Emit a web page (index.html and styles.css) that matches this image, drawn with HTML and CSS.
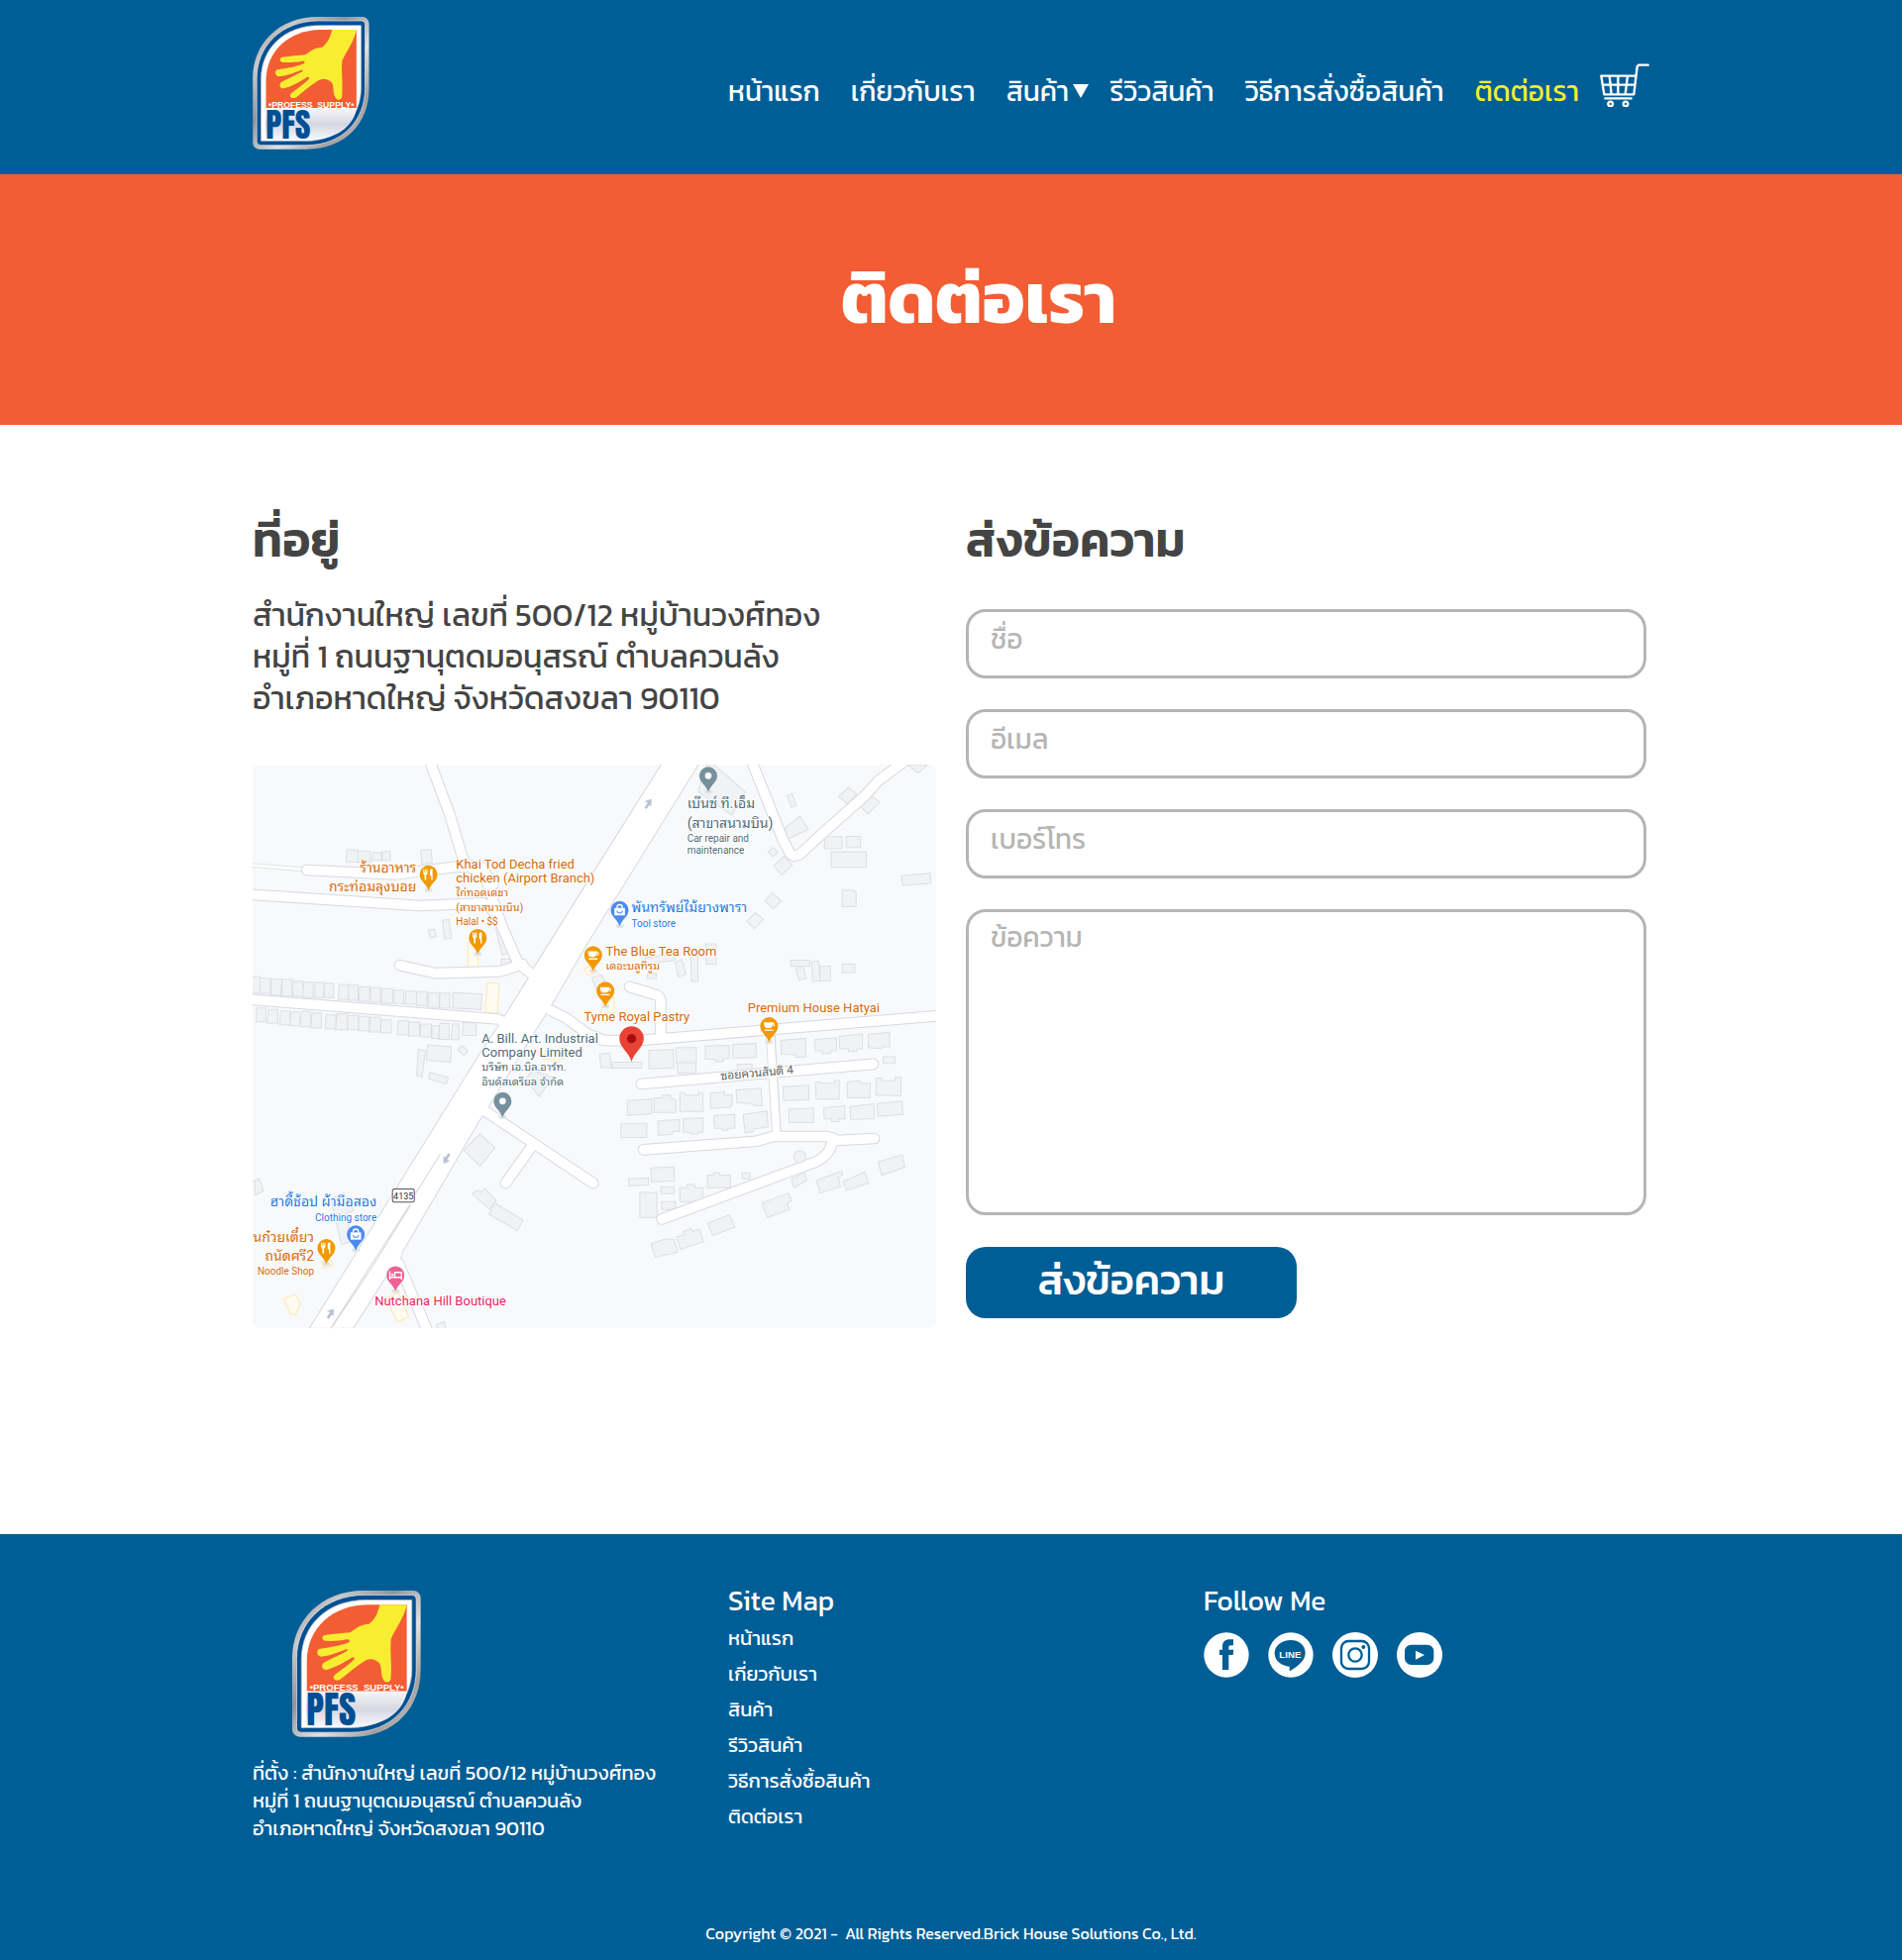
FILE: index.html
```html
<!DOCTYPE html>
<html lang="th">
<head>
<meta charset="utf-8">
<meta name="viewport" content="width=device-width, initial-scale=1">
<title>ติดต่อเรา</title>
<link rel="stylesheet" href="styles.css">
</head>
<body>
<svg class="defs" width="0" height="0" aria-hidden="true">
  <defs>
    <linearGradient id="silver" x1="0" y1="0" x2="1" y2="1">
      <stop offset="0" stop-color="#8f9296"/><stop offset=".2" stop-color="#c9c9cb"/><stop offset=".4" stop-color="#8f9499"/>
      <stop offset=".6" stop-color="#e4e2e0"/><stop offset=".8" stop-color="#a3a09e"/><stop offset="1" stop-color="#d5d2d0"/>
    </linearGradient>
    <linearGradient id="plate" x1="0" y1="0" x2="0" y2="1">
      <stop offset="0" stop-color="#f4f4f8"/><stop offset=".5" stop-color="#d6d7e2"/><stop offset="1" stop-color="#f6f6fa"/>
    </linearGradient>
    <symbol id="logo" viewBox="48 51 353 402">
      <path fill="url(#silver)" d="M245 51H380a20 20 0 0 1 20 20V270C400 370 330 452 210 452H68a20 20 0 0 1-20-20V235C48 135 125 51 245 51Z"/>
      <path fill="#004f92" stroke="#e8e8ea" stroke-width="2" d="M247 63H376a12 12 0 0 1 12 12V268C388 362 322 440 210 440H72a12 12 0 0 1-12-12V237C60 140 135 63 247 63Z"/>
      <path fill="#fff" stroke="#b9bcc2" stroke-width="2" d="M249 77H376V266C376 352 312 427 208 427H73V239C73 148 142 77 249 77Z"/>
      <path fill="url(#plate)" d="M86 330H362C352 386 296 421 232 423H86Z"/>
      <path fill="#f35d33" d="M252 90H362V327H88V246C88 152 160 92 252 90Z"/>
      <path fill="#f9ed32" d="M288 90H362C355 125 332 155 319 183C315 215 322 250 318 295C315 304 303 305 299 297C289 282 295 262 287 250C275 238 262 236 248 243C232 252 208 272 182 293C170 303 156 294 163 284C170 276 205 254 218 239C220 234 216 232 211 235C190 249 160 264 142 268C130 269 126 256 134 249C155 238 176 229 198 217C201 213 198 211 193 213C172 221 148 230 128 232C115 231 113 215 122 211C150 206 180 203 204 192C207 187 203 184 198 185C178 189 158 190 138 189C128 186 129 174 138 173C160 170 185 168 207 166C220 158 230 145 258 143C275 130 282 115 288 90Z"/>
      <text class="logo-band" x="225" y="326" text-anchor="middle">•PROFESS&nbsp; SUPPLY•</text>
      <text class="logo-name" x="87" y="421">PFS</text>
    </symbol>
    <symbol id="pin" viewBox="-30 -30 60 84" overflow="visible">
      <ellipse cx="0" cy="48" rx="12" ry="6" fill="#dfe3e6"/>
      <path d="M-27 0A27 27 0 1 1 27 0C27 20 7 28 0 49C-7 28-27 20-27 0Z"/>
    </symbol>
    <g id="fork" fill="#fff"><path d="M-16-16h3v9h2v-9h3v9h2v-9h3v11q0 6-4 7v15h-5V2q-4-1-4-7zM4-10q0-7 8-7v34H8V4H4z"/></g>
    <g id="cup"><path fill="#fff" d="M-16-11h28v3h5v9H9q-2 5-8 5h-9q-8-2-8-17zM-14 10h27v4h-27z"/><path fill="#f29900" d="M11-5h3v4h-3z"/></g>
    <g id="bag"><path fill="#fff" d="M-16-6h32v22h-32z"/><path fill="none" stroke="#fff" stroke-width="4" d="M-8-5v-3a8 8 0 0 1 16 0v3"/><path fill="none" stroke="#4d8af0" stroke-width="3" d="M-8 2a8 7 0 0 0 16 0"/></g>
  </defs>
</svg>

<header class="header">
  <div class="container header-row">
    <a href="#" aria-label="PFS"><svg class="logo"><use href="#logo"/></svg></a>
    <nav class="nav">
      <a href="#">หน้าแรก</a>
      <a href="#">เกี่ยวกับเรา</a>
      <a class="has-menu" href="#">สินค้า<svg width="16" height="14" viewBox="0 0 16 14"><path fill="#fff" d="M0 0h16L8 14z"/></svg></a>
      <a href="#">รีวิวสินค้า</a>
      <a href="#">วิธีการสั่งซื้อสินค้า</a>
      <a class="active" href="#">ติดต่อเรา</a>
      <a class="cart" href="#" aria-label="ตะกร้าสินค้า"><svg width="50" height="44" viewBox="45 26 150 132" fill="none" stroke="#fff" stroke-width="7" stroke-linecap="round" stroke-linejoin="round"><path d="M191 31H162L158 36L148 120H58L49 64H154M53 91H150M74 64l6 56M100 64v56M129 64l-7 56M61 132H140"/><circle cx="77" cy="149" r="7"/><circle cx="123" cy="149" r="7"/></svg></a>
    </nav>
  </div>
</header>

<section class="hero"><h1>ติดต่อเรา</h1></section>

<main class="container main">
  <section>
    <h2>ที่อยู่</h2>
    <p class="address">สำนักงานใหญ่ เลขที่ 500/12 หมู่บ้านวงศ์ทอง<br>หมู่ที่ 1 ถนนฐานุตดมอนุสรณ์ ตำบลควนลัง<br>อำเภอหาดใหญ่ จังหวัดสงขลา 90110</p>
    <svg class="map" viewBox="0 0 689 568" role="img" aria-label="แผนที่">
      <defs>
        <path id="lanes" d="M578 10L645 190L685 325L755 385L800 520L850 635L890 668M212 355L480 368L665 345L740 345L775 400M20 428L555 463L745 455L780 480M493 643L600 667L795 662L865 640M20 745L790 806L830 825M950 780L995 802L1060 850L1110 870L1190 872L1285 865L2130 795M1188 708L1270 733Q1282 738 1282 755V865M1555 20L1650 260L1672 303Q1685 320 1706 305L1770 245L1900 130L1940 85L2020 26M1223 1002L1925 942M1230 1201L1573 1175L1620 1161H1785L1815 1173L1928 1167M1802 1165Q1800 1215 1750 1238L1285 1411M745 1080L1078 1302M893 1190L813 1302M490 1545L575 1745"/>
        <path id="highway" d="M222 1740L740 905L793 826L883 682L897 655L1100 330L1285 36L1300 10H1410L1395 36L1060 575L947 770L932 793L865 900L760 1070L745 1092L500 1510Q490 1540 497 1560L450 1585L352 1740Z"/>
      </defs>
      <rect width="689" height="568" fill="#f8f9fb"/>
      <g transform="translate(-16 -12) scale(.33333)">
        <g class="block">
          <path d="M333 294h33v36h-35zM366 298h38v34h-38zM412 302h25v24h-28zM440 299h24v27h-24zM556 295l32-2 3 40-31 4zM622 507l20-3 8 57-22 3zM580 537l18-3 5 22-18 4zM783 535l18-3 20 75-18 5zM800 623l28 2-2 22-27-3z"/>
          <path d="M40 677h30v50H40zM70 682h32v46H70zM105 685h32v48h-34zM137 685h30v52h-34zM172 691h28v46h-30zM203 694h28v46h-32zM238 695h27v46h-30zM265 697h28v44h-31zM310 701h28v46h-31zM339 703h28v46h-31zM372 708h30v44h-33zM405 711h30v44h-32zM438 714h34v44h-35zM476 718h29v41h-29zM511 721h33v40h-35zM544 723h32v42h-32zM580 726h32v44h-35zM615 727h29v45h-31zM654 725l88 5-3 47-86-5z"/>
          <path d="M60 772h28v42H58zM96 777h28v42H92zM133 781h28v42h-32zM165 784h26v42h-31zM197 783h27v46h-31zM228 787h28v46h-32zM270 793h30v42h-33zM303 790h32v48h-36zM336 795h32v43h-34zM370 798h31v43h-33zM404 801h31v44h-34zM437 808h30v39h-32zM488 811h32v42h-35zM521 815h32v42h-34zM556 821h32v39h-32zM591 826h21v38h-22zM614 819h28v48h-32zM652 821h20v47h-24zM684 817h40v38h-42z"/>
          <path d="M577 884l72 6-3 46-72-6zM549 897l22 3-11 80-16-3zM584 967l56 15-6 20-54-16zM680 886l20 15-12 14-20-15zM48 1297l20-9 13 38-26 12v-40zM873 990l20-30 62 22-40 58zM735 1153l46 42-45 56-49-48zM712 1335l14-12 12 7 13-11 34 36-20 26zM780 1362l86 52-18 32-85-50zM285 1350l38-18 32 54-25 8 18 85-32 8zM603 1731l25-10 6 24h-28z"/>
          <path d="M1425 20l112 98-40 70-102-70zM1665 130l15-6 12 36-15 5zM1658 228l45-36 26 40-65 30zM1606 300l15-13 16 13-15 15zM1624 342l30-28 26 26-32 30zM1820 133l30-28 25 20-27 30zM1887 163l33-33 24 20-36 36zM2030 36l30 26 30-26zM1597 448l22-25 27 25-23 25zM1543 510l25-26 25 20-28 28zM1778 254h53v36h-54zM1843 253h44v34h-44zM1798 300h106v47h-106zM2011 372l86-7 2 30-86 7zM1831 416h36l6 8v42h-42z"/>
          <path d="M1675 628h58v18h-58zM1690 652l24-6 8 37-22 6zM1738 632l22-2 4 60-22 2zM1765 646h30v44h-32zM1831 640h38v25h-38zM1373 616h22v75h-20zM1418 578h32v62h-30zM1235 620l90-12v20l-88 12zM1325 634l22-8 12 44-24 8zM1242 670l27-3v16h-28zM1074 680l30-8 15 40-30 8z"/>
          <path d="M1098 912l30-4 5 44-32 1zM1135 936h90v18h-90zM1246 900l74-2 2 56-76 2zM1328 892h62v46h-62zM1333 938h56v32h-56zM1417 887l72-2v40h-18v10h-24v-8h-30zM1500 883l70-4 2 42-72 4zM1514 942h44v20h-44zM1645 870l76-6v56l-30 2v-8l-44-2zM1748 868l66-6v40h-18v8h-26v-8h-20zM1822 858l70-8v46h-16v7h-26v-7h-27zM1910 852l64-6v44h-20l-2 6-42-4zM1955 920h36v20h-36z"/>
          <path d="M1181 1052l74-4v44l-74 5zM1262 1044h24v-8h26v8l16 6v38h-66zM1340 1028h14l6 8h36v-8h14v57h-70zM1433 1030l42-4v10h24l-2 36-64 4zM1510 1020l75-5 4 54-24-2-8-6-44-2zM1162 1121h78v43h-78zM1273 1114l66-4v36h-20l-2 8-42 4zM1350 1108l60-4v44h-16v6h-20v-6h-24zM1443 1098l62-4 2 42h-22v6h-16v-6h-24zM1531 1094l72-10 4 48-44 6v8l-26 4zM1652 1010l78-4v44l-76 2zM1750 996h14l6 4h38v-8h14v56h-70zM1846 996l40-4v8h30v44h-70zM1933 984h18v8h40v-10h18v56l-76-2zM1670 1078l74-3v44h-74zM1775 1074l64-6v40h-18v8h-22v-8h-22zM1854 1070l72-8 3 44-72 4zM1936 1062l76-8 3 40-76 6z"/>
          <path d="M1252 1256l70-4 2 44-70 2zM1185 1290l60-4v22l-60 2zM1219 1330h52v76h-52zM1283 1314h40v20h-40zM1285 1358h42v24h-42zM1340 1316h22v-10h24v10h24v42h-70zM1423 1278h20v-8h18v8h32v38h-70zM1528 1271h24v18h-24zM1677 1290l40-20 6 24-38 22zM1752 1294l76-28 5 10-14 8 6 28-60 20zM1833 1298l66-30 12 34-66 22zM1939 1238l74-22 8 38-70 24zM1588 1362l80-30 10 22-14 10 8 18-68 24zM1424 1424l66-26 16 38-66 24zM1252 1486l40-14h30l12 38-68 16zM1330 1466l22-8-2-10 24-8 4 8 22-6 12 38-70 22z"/>
        </g>
        <g class="shop-block"><path d="M700 575h28l3 78h-32zM758 695l36 4-6 91-37-6zM1050 655l20-10 12 24-22 4zM1108 745l32-5 2 48h-40zM925 925l12-30 30 8 20-15 25 25-40 20zM142 1652l36-14 14 28-14 34-16-2zM450 1650l40-16 30 72-34 16zM256 1540l30-6 4 18-26 6z"/></g>
        <path class="thin-casing" d="M20 338L205 353"/><path class="thin-lane" d="M20 338L205 353"/>
        <use href="#lanes" class="casing"/><path class="casing wide" d="M1614 850L1633 1160"/><use href="#highway" class="casing edge"/>
        <use href="#highway" fill="#fff"/><use href="#lanes" class="lane"/><path class="lane wide" d="M1614 860L1633 1165"/>
        <path class="median" d="M285 1740L400 1560L525 1365M290 1735L410 1555L525 1370M540 1335L615 1215"/>
        <circle class="round" cx="1703" cy="1222" r="18"/>
        <path fill="#b9bfd4" d="M1233 166l10-15-9-4 20-7v22l-6-4-9 13zM272 1708l10-15-9-4 20-7v22l-6-4-9 13zM646 1216l-10 15 9 4-20 8v-23l6 4 9-13z"/>
      </g>
      <g class="label food">
        <text x="165" y="109" text-anchor="end" class="th">ร้านอาหาร</text>
        <text x="165" y="128" text-anchor="end" class="th">กระท่อมลุงบอย</text>
        <text x="205" y="105">Khai Tod Decha fried</text><text x="205" y="119">chicken (Airport Branch)</text>
        <text x="205" y="133" class="th-sm">ไก่ทอดเดชา</text><text x="205" y="148" class="th-sm">(สาขาสนามบิน)</text><text x="205" y="162" class="sm">Halal • $$</text>
        <text x="356" y="193">The Blue Tea Room</text><text x="356" y="207" class="th-sm">เดอะบลูทีรูม</text>
        <text x="334" y="259">Tyme Royal Pastry</text><text x="499" y="250">Premium House Hatyai</text>
        <text x="62" y="481" text-anchor="end" class="th">านก๋วยเตี๋ยว</text><text x="62" y="500" text-anchor="end" class="th">ถนัดศรี2</text><text x="62" y="514" text-anchor="end" class="sm">Noodle Shop</text>
      </g>
      <g class="label place">
        <text x="438" y="44" class="th">เบ๊นซ์ ที.เอ็ม</text><text x="438" y="64" class="th">(สาขาสนามบิน)</text>
        <text x="438" y="78" class="sm">Car repair and</text><text x="438" y="90" class="sm">maintenance</text>
        <text x="231" y="281">A. Bill. Art. Industrial</text><text x="231" y="295">Company Limited</text>
        <text x="231" y="309" class="th-sm">บริษัท เอ.บิล.อาร์ท.</text><text x="231" y="324" class="th-sm">อินดัสเตรียล จำกัด</text>
      </g>
      <g class="label store">
        <text x="382" y="149" class="th">พันทรัพย์ไม้ยางพารา</text><text x="382" y="164" class="sm">Tool store</text>
        <text x="125" y="445" text-anchor="end" class="th">ฮาดี้ช้อป ผ้ามือสอง</text><text x="125" y="460" text-anchor="end" class="sm">Clothing store</text>
      </g>
      <text class="label hotel" x="123" y="545">Nutchana Hill Boutique</text>
      <text class="label street" x="472" y="318" transform="rotate(-5 472 318)">ซอยควนสันติ 4</text>
      <rect x="141" y="428" width="22" height="13" rx="2" fill="#fff" stroke="#555"/>
      <text class="label route" x="152" y="438" text-anchor="middle">4135</text>
      <g transform="translate(-16 -12) scale(.33333)">
        <g fill="#f29900">
          <g transform="translate(580 368)"><use href="#pin" x="-30" y="-30" width="60" height="84"/><use href="#fork"/></g>
          <g transform="translate(729 560)"><use href="#pin" x="-30" y="-30" width="60" height="84"/><use href="#fork"/></g>
          <g transform="translate(271 1498)"><use href="#pin" x="-30" y="-30" width="60" height="84"/><use href="#fork"/></g>
          <g transform="translate(1078 612)"><use href="#pin" x="-30" y="-30" width="60" height="84"/><use href="#cup"/></g>
          <g transform="translate(1115 720)"><use href="#pin" x="-30" y="-30" width="60" height="84"/><use href="#cup"/></g>
          <g transform="translate(1610 827)"><use href="#pin" x="-30" y="-30" width="60" height="84"/><use href="#cup"/></g>
        </g>
        <g fill="#4d8af0">
          <g transform="translate(1158 476)"><use href="#pin" x="-30" y="-30" width="60" height="84"/><use href="#bag"/></g>
          <g transform="translate(360 1457)"><use href="#pin" x="-30" y="-30" width="60" height="84"/><use href="#bag"/></g>
        </g>
        <g fill="#76909d">
          <g transform="translate(1426 70)"><use href="#pin" x="-30" y="-30" width="60" height="84"/><circle r="10" fill="#fff"/></g>
          <g transform="translate(804 1054)"><use href="#pin" x="-30" y="-30" width="60" height="84"/><circle r="10" fill="#fff"/></g>
        </g>
        <g fill="#f06292" transform="translate(480 1580)"><use href="#pin" x="-30" y="-30" width="60" height="84"/><path fill="none" stroke="#fff" stroke-width="4" d="M-17-12V14M-17 7H18V14M18 7V-8H-2V7"/><circle cx="-9" cy="-1" r="4" fill="#fff"/></g>
        <g transform="translate(1194 865)"><path fill="#ea4335" d="M-37 0A37 37 0 1 1 37 0C36 28 8 40 0 70C-8 40-36 28-37 0Z"/><circle r="14" fill="#a50e0e"/></g>
      </g>
    </svg>
  </section>

  <form class="form">
    <h2>ส่งข้อความ</h2>
    <input type="text" placeholder="ชื่อ" aria-label="ชื่อ">
    <input type="email" placeholder="อีเมล" aria-label="อีเมล">
    <input type="tel" placeholder="เบอร์โทร" aria-label="เบอร์โทร">
    <textarea placeholder="ข้อความ" aria-label="ข้อความ"></textarea>
    <button type="button">ส่งข้อความ</button>
  </form>
</main>

<footer class="footer">
  <div class="container footer-grid">
    <div class="footer-about">
      <svg class="footer-logo" role="img" aria-label="PFS"><use href="#logo"/></svg>
      <p>ที่ตั้ง : สำนักงานใหญ่ เลขที่ 500/12 หมู่บ้านวงศ์ทอง<br>หมู่ที่ 1 ถนนฐานุตดมอนุสรณ์ ตำบลควนลัง<br>อำเภอหาดใหญ่ จังหวัดสงขลา 90110</p>
    </div>
    <div>
      <h3>Site Map</h3>
      <ul class="links">
        <li><a href="#">หน้าแรก</a></li>
        <li><a href="#">เกี่ยวกับเรา</a></li>
        <li><a href="#">สินค้า</a></li>
        <li><a href="#">รีวิวสินค้า</a></li>
        <li><a href="#">วิธีการสั่งซื้อสินค้า</a></li>
        <li><a href="#">ติดต่อเรา</a></li>
      </ul>
    </div>
    <div>
      <h3>Follow Me</h3>
      <div class="social">
        <a href="#" aria-label="Facebook"><svg width="46" height="46" viewBox="0 0 138 138"><circle cx="69" cy="69" r="68" fill="#fff"/><path fill="#005e97" d="M57 114V69H48V53h9V44C57 29 66 22 79 22H90V40H83C78 40 76 42 76 47V53H91L89 69H76V114Z"/></svg></a>
        <a href="#" aria-label="LINE"><svg width="46" height="46" viewBox="0 0 138 138"><circle cx="69" cy="69" r="68" fill="#fff"/><path fill="#005e97" d="M69 24C96 24 113 41 113 63C113 87 87 106 67 117Q64 118 65 112V104C41 102 20 87 20 63C20 41 42 24 69 24Z"/><text class="line-word" x="67" y="77" text-anchor="middle">LINE</text></svg></a>
        <a href="#" aria-label="Instagram"><svg width="46" height="46" viewBox="0 0 138 138"><circle cx="69" cy="69" r="69" fill="#fff"/><g fill="none" stroke="#005e97" stroke-width="7"><rect x="27" y="27" width="84" height="84" rx="22"/><circle cx="69" cy="69" r="20"/></g><circle cx="94" cy="45" r="6" fill="#005e97"/></svg></a>
        <a href="#" aria-label="YouTube"><svg width="46" height="46" viewBox="0 0 138 138"><circle cx="69" cy="69" r="69" fill="#fff"/><rect x="24" y="38" width="88" height="61" rx="20" fill="#005e97"/><path fill="#fff" d="M57 56L84 69L57 83Z"/></svg></a>
      </div>
    </div>
  </div>
  <p class="copyright">Copyright © 2021 -&nbsp; All Rights Reserved.Brick House Solutions Co., Ltd.</p>
</footer>
</body>
</html>
```

FILE: styles.css
```css
* { box-sizing: border-box; }
body {
  margin: 0;
  background: #fff;
  color: #444;
  font-family: Kanit, Prompt, "Noto Sans Thai", "Noto Sans", sans-serif;
}
h1, h2, h3, p, ul { margin: 0; padding: 0; }
a { color: inherit; text-decoration: none; }
.defs { position: absolute; }
.container { width: 100%; max-width: 1458px; margin: 0 auto; padding: 0 24px; }

.header { background: #005e97; color: #fff; }
.header-row { display: flex; justify-content: space-between; height: 176px; padding-top: 17px; }
.logo { display: block; width: 118px; height: 134px; }
.logo-band { fill: #fff; font: bold 26px "Liberation Sans", sans-serif; }
.logo-name { fill: #004f92; font: 102px Anton, Impact, "Liberation Sans Narrow", "Liberation Sans", sans-serif; }
.nav { display: flex; align-items: center; gap: 31px; height: 134px; padding-top: 16px; font-size: 28px; line-height: 44px; }
.nav a { white-space: nowrap; }
.nav .has-menu { display: flex; align-items: center; gap: 4px; margin-right: -10px; }
.nav .active { color: #f9ed32; }
.nav .cart { margin-left: -10px; height: 56px; }

.hero { display: flex; justify-content: center; align-items: center; height: 253px; padding: 0 0 4px 56px; background: #f35d33; color: #fff; }
h1 { font-size: 72px; line-height: 104px; font-weight: 700; }

.main { display: grid; grid-template-columns: 1fr 1fr; gap: 30px; padding-top: 80px; padding-bottom: 208px; }
h2 { font-size: 48px; line-height: 72px; font-weight: 600; }
.address { margin-top: 19px; font-size: 32px; line-height: 42px; }
.map { display: block; width: 100%; margin-top: 46px; border-radius: 6px; }
.block { fill: #f0f2f3; stroke: #dcdfe3; stroke-width: 3; }
.shop-block { fill: #fffbf0; stroke: #fde8b3; stroke-width: 3; }
.casing, .lane { fill: none; stroke-linecap: round; stroke-linejoin: round; }
.casing { stroke: #d6d9e0; stroke-width: 35; }
.lane { stroke: #fff; stroke-width: 29; }
.casing.edge { stroke-width: 6; }
.casing.wide { stroke-width: 29; stroke-linecap: butt; }
.lane.wide { stroke-width: 23; stroke-linecap: butt; }
.thin-casing { stroke: #dfe2e4; stroke-width: 14; }
.thin-lane { stroke: #fff; stroke-width: 8; }
.median { fill: none; stroke: #d6d9e0; stroke-width: 3; }
.round { fill: #f0f2f3; stroke: #dcdfe3; stroke-width: 3; }
.label { font-family: Roboto, "Noto Sans Thai Looped", "Noto Looped Thai", Sarabun, Loma, Garuda, "Noto Sans Thai", sans-serif; font-size: 13px; paint-order: stroke; stroke: #fff; stroke-width: 2px; }
.th { font-size: 14px; }
.th-sm { font-size: 11px; }
.sm { font-size: 10px; }
.food { fill: #d56a08; }
.place { fill: #4f6b78; }
.store { fill: #2478e4; }
.hotel { fill: #e91e63; }
.street { font-size: 12px; fill: #666; }
.route { font-size: 9px; fill: #333; stroke: none; }

.form { display: flex; flex-direction: column; padding-right: 3px; }
.form input, .form textarea {
  width: 100%;
  height: 70px;
  padding: 0 22px 10px;
  border: 3px solid #b5b5b5;
  border-radius: 20px;
  background: #fff;
  color: #444;
  font: inherit;
  font-size: 28px;
}
.form input { margin-bottom: 31px; }
.form h2 { margin-bottom: 34px; }
.form textarea { height: 309px; margin-bottom: 32px; padding-top: 3px; line-height: 44px; resize: none; }
.form ::placeholder { color: #b5b5b5; opacity: 1; }
.form button { width: 334px; height: 72px; padding: 0 0 6px; border: 0; border-radius: 20px; background: #005e97; color: #fff; font: inherit; font-size: 42px; font-weight: 500; }

.footer { background: #005e97; color: #fff; }
.footer-grid { display: grid; grid-template-columns: repeat(3, 1fr); gap: 30px; padding-top: 47px; }
.footer-logo { display: block; width: 130px; height: 148px; margin: 10px 0 22px 40px; }
.footer-about p { font-size: 20px; line-height: 28px; white-space: nowrap; }
h3 { font-size: 28px; line-height: 40px; font-weight: 400; }
.links { list-style: none; font-size: 20px; line-height: 36px; }
.social { display: flex; gap: 19px; margin-top: 12px; }
.social svg { display: block; }
.line-word { fill: #fff; font: bold 29px "Liberation Sans", sans-serif; }
.copyright { padding: 80px 0 16px; text-align: center; font-size: 16px; line-height: 24px; }
```
